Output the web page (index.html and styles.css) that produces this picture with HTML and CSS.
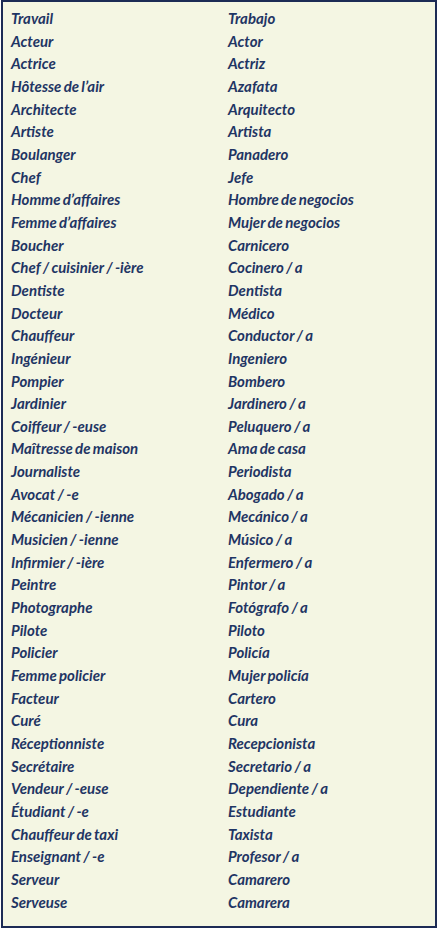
FILE: index.html
```html
<!DOCTYPE html>
<html lang="fr">
<head>
<meta charset="utf-8">
<title>Travail / Trabajo</title>
<link rel="stylesheet" href="styles.css">
</head>
<body>
<div class="box">
  <div class="row"><span>Travail</span><span>Trabajo</span></div>
  <div class="row"><span>Acteur</span><span>Actor</span></div>
  <div class="row"><span>Actrice</span><span>Actriz</span></div>
  <div class="row"><span>Hôtesse de l’air</span><span>Azafata</span></div>
  <div class="row"><span>Architecte</span><span>Arquitecto</span></div>
  <div class="row"><span>Artiste</span><span>Artista</span></div>
  <div class="row"><span>Boulanger</span><span>Panadero</span></div>
  <div class="row"><span>Chef</span><span>Jefe</span></div>
  <div class="row"><span>Homme d’affaires</span><span>Hombre de negocios</span></div>
  <div class="row"><span>Femme d’affaires</span><span>Mujer de negocios</span></div>
  <div class="row"><span>Boucher</span><span>Carnicero</span></div>
  <div class="row"><span>Chef / cuisinier / -ière</span><span>Cocinero / a</span></div>
  <div class="row"><span>Dentiste</span><span>Dentista</span></div>
  <div class="row"><span>Docteur</span><span>Médico</span></div>
  <div class="row"><span>Chauffeur</span><span>Conductor / a</span></div>
  <div class="row"><span>Ingénieur</span><span>Ingeniero</span></div>
  <div class="row"><span>Pompier</span><span>Bombero</span></div>
  <div class="row"><span>Jardinier</span><span>Jardinero / a</span></div>
  <div class="row"><span>Coiffeur / -euse</span><span>Peluquero / a</span></div>
  <div class="row"><span>Maîtresse de maison</span><span>Ama de casa</span></div>
  <div class="row"><span>Journaliste</span><span>Periodista</span></div>
  <div class="row"><span>Avocat / -e</span><span>Abogado / a</span></div>
  <div class="row"><span>Mécanicien / -ienne</span><span>Mecánico / a</span></div>
  <div class="row"><span>Musicien / -ienne</span><span>Músico / a</span></div>
  <div class="row"><span>Infirmier / -ière</span><span>Enfermero / a</span></div>
  <div class="row"><span>Peintre</span><span>Pintor / a</span></div>
  <div class="row"><span>Photographe</span><span>Fotógrafo / a</span></div>
  <div class="row"><span>Pilote</span><span>Piloto</span></div>
  <div class="row"><span>Policier</span><span>Policía</span></div>
  <div class="row"><span>Femme policier</span><span>Mujer policía</span></div>
  <div class="row"><span>Facteur</span><span>Cartero</span></div>
  <div class="row"><span>Curé</span><span>Cura</span></div>
  <div class="row"><span>Réceptionniste</span><span>Recepcionista</span></div>
  <div class="row"><span>Secrétaire</span><span>Secretario / a</span></div>
  <div class="row"><span>Vendeur / -euse</span><span>Dependiente / a</span></div>
  <div class="row"><span>Étudiant / -e</span><span>Estudiante</span></div>
  <div class="row"><span>Chauffeur de taxi</span><span>Taxista</span></div>
  <div class="row"><span>Enseignant / -e</span><span>Profesor / a</span></div>
  <div class="row"><span>Serveur</span><span>Camarero</span></div>
  <div class="row"><span>Serveuse</span><span>Camarera</span></div>
</div>
</body>
</html>
```
FILE: styles.css
```css
html, body {
  margin: 0;
  padding: 0;
  background: #ffffff;
}
body {
  padding-left: 1px;
}
.box {
  box-sizing: border-box;
  width: 436px;
  height: 928px;
  border: 2px solid #1c2b55;
  background: #f4f6e3;
  padding: 5px 0 0 8px;
  font-family: Lato, "Open Sans", sans-serif;
  font-weight: 700;
  font-style: italic;
  font-size: 15px;
  color: #1f3564;
  word-spacing: -1px;
}
.row {
  display: grid;
  grid-template-columns: 217px 1fr;
  height: 22.67px;
  line-height: 22.67px;
  white-space: nowrap;
}
```
